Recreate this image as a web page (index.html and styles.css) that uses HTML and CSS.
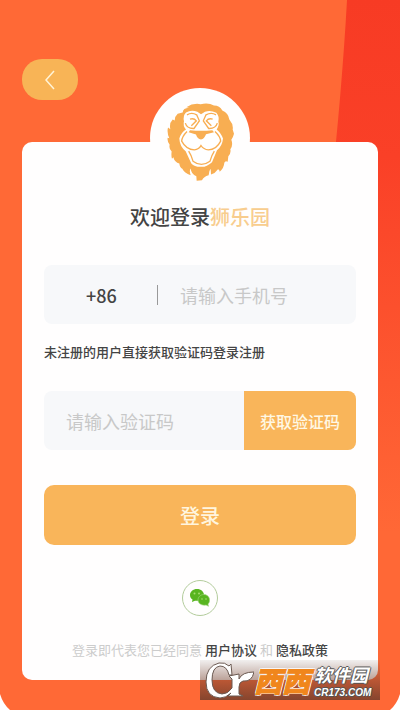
FILE: index.html
```html
<!DOCTYPE html>
<html lang="zh-CN">
<head>
    <meta charset="UTF-8">
    <meta name="viewport" content="width=device-width, initial-scale=1.0">
    <title>登录</title>
    <link rel="stylesheet" href="styles.css">
</head>
<body>
    <div class="page">
        <svg class="stripe" viewBox="0 0 70 710" preserveAspectRatio="none" aria-hidden="true">
            <defs>
                <linearGradient id="stripeFill" x1="0" y1="0" x2="0" y2="1">
                    <stop offset="0" stop-color="#f73b24"/>
                    <stop offset="0.22" stop-color="#fa4027"/>
                    <stop offset="0.75" stop-color="#ff6836"/>
                </linearGradient>
            </defs>
            <path d="M17 0H70V710H0V200Q12 90 17 0Z" fill="url(#stripeFill)"/>
        </svg>

        <header>
            <button class="back" type="button" aria-label="返回">
                <svg width="10" height="20" viewBox="0 0 10 20"><path d="M9 1L1 10L9 19" fill="none" stroke="#fff3d6" stroke-width="1.5"/></svg>
            </button>
        </header>

        <form class="card">
            <div class="logo">
                <svg width="67" height="78" viewBox="497 310 201 233">
                    <path fill="#f8ae52" d="M555 322Q575 309 598 313Q621 307 638 317Q655 317 663 332Q681 339 684 359Q697 374 694 389L698 402Q695 414 690 420Q696 436 687 448Q690 460 681 469L679 486Q672 481 669 489Q668 505 655 516Q655 508 650 508Q642 520 629 524L628 507Q622 514 622 526Q607 530 602 541L586 543L585 529Q570 524 568 506Q563 512 568 526Q549 520 543 507Q535 503 534 491Q520 487 516 472L512 477Q509 466 511 455Q502 446 505 435Q497 425 499 414L504 415Q496 399 500 383L507 388Q503 370 514 359L520 362Q520 350 529 342L544 338Q545 325 563 324Z"/>
                    <path fill="#fff" d="M554 338Q570 329 588 336L599 343L611 336Q627 330 645 339Q655 350 651 366Q655 376 646 389Q658 398 665 416Q663 439 647 451L632 487Q615 502 600 501Q580 502 570 491L553 454Q535 440 534 416Q540 397 554 389Q544 377 548 364Q544 348 554 338Z"/>
                    <g fill="none" stroke="#f8ae52" stroke-width="4">
                        <path d="M557 345Q571 336 586 345L594 363L578 386Q557 387 552 370M644 345Q630 336 614 345L606 363L622 386Q643 387 648 370"/>
                        <path d="M566 358Q578 354 585 363L570 378M634 358Q622 354 615 363L630 378"/>
                        <path d="M557 395Q542 410 541 424Q555 450 579 450Q593 449 599 437Q607 449 621 450Q645 450 658 424Q657 410 641 395"/>
                        <path d="M562 454Q570 466 575 484Q600 503 626 484Q631 466 639 454"/>
                    </g>
                    <path fill="#f8ae52" d="M566 391Q600 395 633 391L638 397L614 403Q609 417 599 419Q588 417 584 404L562 397Z"/>
                </svg>
            </div>

            <h1>欢迎登录<span>狮乐园</span></h1>

            <div class="field phone">
                <span class="area">+86</span>
                <input type="tel" aria-label="手机号" placeholder="请输入手机号">
            </div>
            <p class="note">未注册的用户直接获取验证码登录注册</p>

            <div class="field code">
                <input type="text" aria-label="验证码" placeholder="请输入验证码">
                <button class="get-code" type="button">获取验证码</button>
            </div>

            <button class="login" type="button">登录</button>

            <button class="wechat" type="button" aria-label="微信登录">
                <svg width="20" height="18" viewBox="0 0 20 18">
                    <path fill="#58b520" d="M7 0C3 0 0 2.700 0 6C0 8 1 9.500 2.500 10.500L2 13L5 11.700C9 12.500 14 10 14 6C14 2.700 11 0 7 0Z"/>
                    <path fill="#58b520" stroke="#a5d884" stroke-width="0.600" d="M14 5.500C10.500 5.500 8 8 8 11C8 14.500 12 17 16 16L18.500 17.300L18 15C21.500 11.500 19 5.500 14 5.500Z"/>
                    <g fill="#a5dc70"><circle cx="4.500" cy="4.500" r="1"/><circle cx="9" cy="4.500" r="1"/><circle cx="12" cy="10" r="0.800"/><circle cx="16" cy="10" r="0.800"/></g>
                </svg>
            </button>

            <p class="agreement">登录即代表您已经同意 <a href="#">用户协议</a> 和 <a href="#">隐私政策</a></p>
        </form>

        <svg class="corner left" viewBox="0 0 10 16"><path d="M0 0Q3 10 10 16H0Z" fill="#fff"/></svg>
        <svg class="corner right" viewBox="0 0 10 16"><path d="M10 0Q7 10 0 16H10Z" fill="#fff"/></svg>

        <div class="watermark">
            <svg width="54" height="38" viewBox="0 0 54 38" role="img" aria-label="Cr">
                <path fill="#fff" stroke="#6b5a52" stroke-width="1" d="M31 3L32 14H29Q27 5 20 5Q12 6 12 19Q12 32 22 33Q28 33 32 27V18L29 15L39 13V18Q42 11 54 11Q52 21 43 20Q39 21 39 26V33L43 35H28L31 32Q26 37 20 37Q6 36 6 21Q6 5 19 2Q25 1 29 5Z"/>
            </svg>
            <b class="brand">西西</b>
            <div class="site">
                <b>软件园</b>
                <i>CR173.COM</i>
            </div>
        </div>
    </div>
</body>
</html>
```
FILE: styles.css
```css
* {
    box-sizing: border-box;
}
body {
    margin: 0;
    font-family: "Noto Sans CJK SC", sans-serif;
    background: #ff6936;
    color: #444;
}
button, input {
    font-family: inherit;
    border: none;
    padding: 0;
}
button {
    cursor: pointer;
}
.page {
    position: relative;
    min-height: 100vh;
    padding: 59px 22px 30px;
    overflow: hidden;
}
.stripe {
    position: absolute;
    top: 0;
    right: 0;
    width: 70px;
    height: 100%;
}
header {
    display: flex;
}
.back {
    display: flex;
    align-items: center;
    justify-content: center;
    width: 56px;
    height: 41px;
    border-radius: 20px;
    background: #f8b456;
}
.card {
    position: relative;
    display: flex;
    flex-direction: column;
    margin-top: 42px;
    padding: 0 22px 20px;
    background: #fffefe;
    border-radius: 10px;
}
.logo {
    display: flex;
    justify-content: center;
    align-self: center;
    width: 100px;
    height: 100px;
    margin-top: -54px;
    padding-top: 15px;
    border-radius: 50%;
    background: #fffefe;
}
h1 {
    margin: 14px 0 33px;
    font-size: 20px;
    line-height: 30px;
    font-weight: 500;
    text-align: center;
}
h1 span {
    color: #f8cd8e;
}
.field {
    display: flex;
    height: 59px;
    border-radius: 8px;
    background: #f7f8fa;
    overflow: hidden;
}
.field input {
    flex: 1;
    min-width: 0;
    padding-left: 22px;
    font-size: 18px;
    background: none;
}
.field input::placeholder {
    color: #c8c8c8;
}
.phone {
    align-items: center;
}
.area {
    width: 114px;
    padding-left: 42px;
    font-size: 18px;
    line-height: 20px;
    font-weight: 500;
    border-right: 1px solid #999;
}
.note {
    margin: 17px 0 28px;
    font-size: 13px;
    line-height: 22px;
    font-weight: 500;
}
.get-code {
    width: 112px;
    font-size: 16px;
    font-weight: 500;
    color: #fff8e4;
    background: #f9b55a;
}
.login {
    height: 60px;
    margin-top: 35px;
    border-radius: 10px;
    font-size: 20px;
    font-weight: 500;
    color: #fff5df;
    background: #f9b55a;
}
.wechat {
    display: flex;
    align-items: center;
    justify-content: center;
    align-self: center;
    width: 36px;
    height: 36px;
    margin-top: 35px;
    border: 1px solid #b3cc9c;
    border-radius: 50%;
    background: none;
}
.agreement {
    margin: 24px 0 0;
    font-size: 13px;
    line-height: 20px;
    text-align: center;
    white-space: nowrap;
    color: #ccc;
}
.agreement a {
    color: #444;
    font-weight: 500;
    text-decoration: none;
}
.corner {
    position: absolute;
    bottom: 0;
    width: 10px;
    height: 16px;
}
.left {
    left: 0;
}
.right {
    right: 0;
}
.watermark {
    position: absolute;
    right: 20px;
    bottom: 10px;
    display: flex;
    align-items: center;
    width: 180px;
    height: 40px;
    color: #fff;
    white-space: nowrap;
    background: linear-gradient(rgba(120, 110, 105, 0.1), rgba(120, 65, 45, 0.9));
}
.brand {
    font-size: 28px;
    line-height: 40px;
    font-weight: 900;
    font-style: italic;
    color: #f0861c;
    -webkit-text-stroke: 1px #f0861c;
    text-shadow: 1px 1px #fff, -1px -1px #fff, 1px -1px #fff, -1px 1px #fff;
}
.site {
    display: flex;
    flex-direction: column;
    margin-left: 4px;
    text-shadow: 1px 0 #555, -1px 0 #555, 0 1px #555, 0 -1px #555;
}
.site b {
    font-size: 18px;
    line-height: 26px;
    font-style: italic;
}
.site i {
    font-family: "Liberation Sans", sans-serif;
    font-size: 10px;
    line-height: 12px;
    font-weight: bold;
}
```
